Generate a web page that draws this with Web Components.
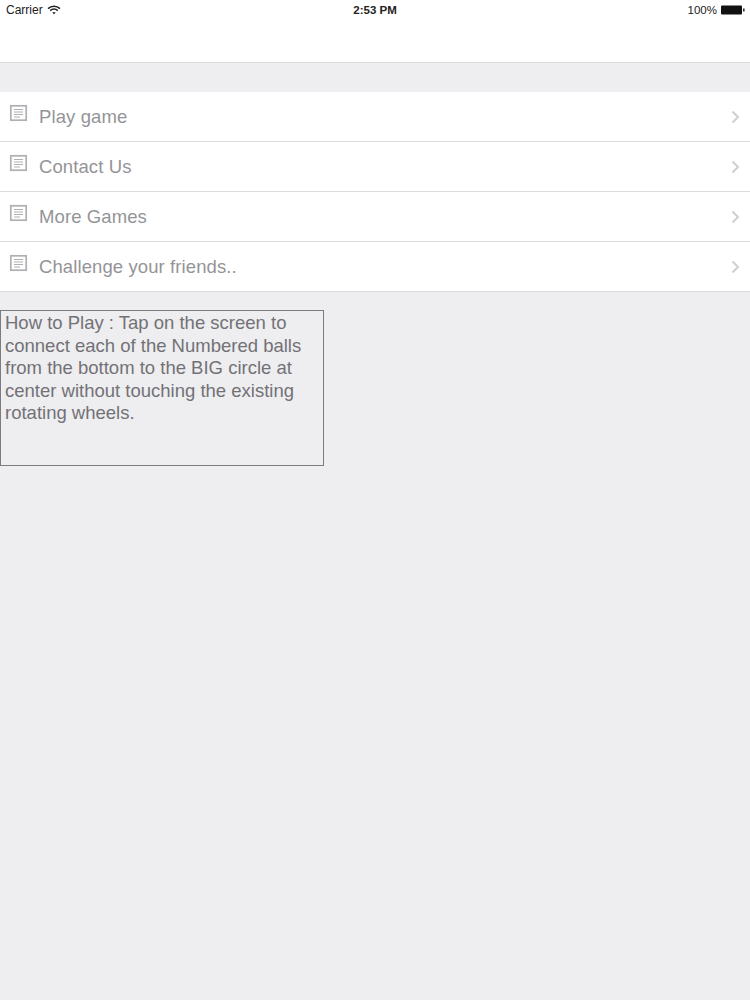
<!DOCTYPE html>
<html>
<head>
<meta charset="utf-8">
<title>Menu</title>
<style>
  html, body { margin: 0; padding: 0; }
  body { background-color: #eeedf0; font-family: "Liberation Sans", Arial, sans-serif; }
</style>
</head>
<body>
<app-header></app-header>
<menu-list>
  <menu-row>Play game</menu-row>
  <menu-row>Contact Us</menu-row>
  <menu-row>More Games</menu-row>
  <menu-row>Challenge your friends..</menu-row>
</menu-list>
<how-to-box>How to Play : Tap on the screen to connect each of the Numbered balls from the bottom to the BIG circle at center without touching the existing rotating wheels.</how-to-box>

<script>
class AppHeader extends HTMLElement {
  constructor() {
    super();
    this.attachShadow({ mode: "open" });
    this.shadowRoot.innerHTML = `
    <style>
      :host {
        display: block;
        height: 62px;
        background-color: #fff;
        border-bottom: 1px solid #dcdcdc;
      }
      .status {
        height: 20px;
        display: grid;
        grid-template-columns: 1fr auto 1fr;
        align-items: center;
        padding: 0 5px 0 6px;
        font-size: 11.5px;
        color: #222;
      }
      .left { display: flex; align-items: center; gap: 4px; }
      .carrier { font-size: 12px; }
      .time { font-weight: 700; font-size: 11.5px; margin-left: -1px; }
      .right { display: flex; align-items: center; justify-content: flex-end; gap: 4px; }
    </style>
    <div class="status">
      <div class="left">
        <span class="carrier">Carrier</span>
        <svg width="14" height="10" viewBox="0 0 14 10">
          <path d="M1 3.6C4.4 .4 9.6 .4 13 3.6" fill="none" stroke="#222" stroke-width="1.5"/>
          <path d="M3.2 5.6C5.4 3.6 8.6 3.6 10.8 5.6" fill="none" stroke="#222" stroke-width="1.5"/>
          <path d="M5.3 7.5C6.3 6.7 7.7 6.7 8.7 7.5L7 9.3Z" fill="#222"/>
        </svg>
      </div>
      <div class="time">2:53 PM</div>
      <div class="right">
        <span>100%</span>
        <svg width="24" height="10" viewBox="0 0 24 10">
          <rect x="0" y="0.5" width="21" height="9" rx="1" fill="#111"/>
          <rect x="22" y="3.5" width="1.6" height="3" fill="#333"/>
        </svg>
      </div>
    </div>`;
  }
}

class MenuList extends HTMLElement {
  constructor() {
    super();
    this.attachShadow({ mode: "open" });
    this.shadowRoot.innerHTML = `
    <style>
      :host { display: block; margin-top: 29px; }
    </style>
    <slot></slot>`;
  }
}

class MenuRow extends HTMLElement {
  constructor() {
    super();
    this.attachShadow({ mode: "open" });
    this.shadowRoot.innerHTML = `
    <style>
      :host {
        display: flex;
        align-items: center;
        height: 49px;
        background-color: #fff;
        border-bottom: 1px solid #dcdcdc;
        color: #949498;
        font-size: 18.5px;
        letter-spacing: 0.1px;
      }
      .doc { margin: 12px 11px 0 9px; flex: none; align-self: flex-start; }
      .label { flex: 1; }
      .chevron { margin-right: 10px; flex: none; }
    </style>
    <svg class="doc" width="19" height="18" viewBox="0 0 19 18" fill="none" stroke="#b0b0b4">
      <rect x="1.8" y="1.8" width="15.4" height="14.4" stroke-width="1.7"/>
      <path d="M5 5.5h9M5 8h9M5 10.5h9M5 13h6" stroke-width="1.1"/>
    </svg>
    <span class="label"><slot></slot></span>
    <svg class="chevron" width="9" height="14" viewBox="0 0 9 14" fill="none" stroke="#cfcfd2" stroke-width="2">
      <path d="M1.5 1.5L7 7L1.5 12.5"/>
    </svg>`;
  }
}

class HowToBox extends HTMLElement {
  constructor() {
    super();
    this.attachShadow({ mode: "open" });
    this.shadowRoot.innerHTML = `
    <style>
      :host {
        display: block;
        box-sizing: border-box;
        width: 324px;
        height: 156px;
        margin-top: 18px;
        border: 1px solid #7c7c80;
        padding: 1px 4px;
        color: #727276;
        font-size: 18.5px;
        line-height: 22.6px;
      }
    </style>
    <slot></slot>`;
  }
}

customElements.define("app-header", AppHeader);
customElements.define("menu-list", MenuList);
customElements.define("menu-row", MenuRow);
customElements.define("how-to-box", HowToBox);
</script>
</body>
</html>
